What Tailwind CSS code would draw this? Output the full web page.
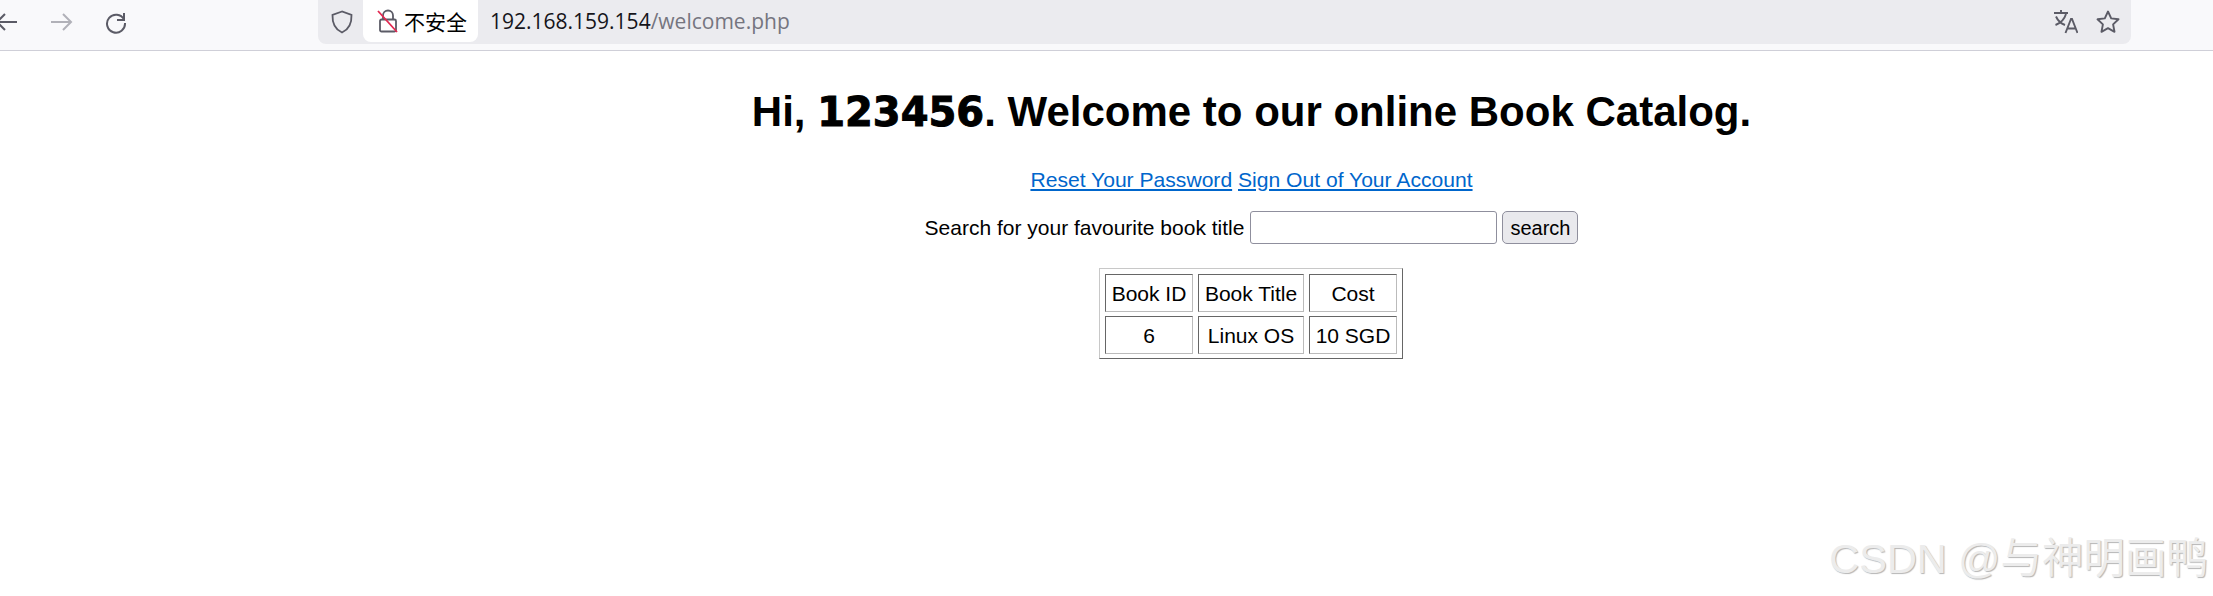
<!DOCTYPE html>
<html lang="en">
<head>
    <meta charset="UTF-8" />
    <title>Welcome</title>
    <script src="https://cdn.jsdelivr.net/npm/@tailwindcss/browser@4"></script>
</head>
<body class="relative h-[596px] overflow-hidden bg-white font-['Liberation_Sans','Noto_Sans_CJK_SC',sans-serif] text-black">
    <!-- Browser toolbar -->
    <div class="flex h-[51px] items-start border-b border-[#cfcfd8] bg-[#f9f9fb]">
        <div class="flex h-[44px] w-[318px] shrink-0 items-center text-[#5b5b66]">
            <svg class="ml-[-6px] h-6 w-6" viewBox="0 0 24 24" fill="none" stroke="currentColor" stroke-width="2"><path d="M23 12H3M11 4l-8 8 8 8"/></svg>
            <svg class="ml-[32px] h-6 w-6 text-[#b1b1b8]" viewBox="0 0 24 24" fill="none" stroke="currentColor" stroke-width="2"><path d="M1 12h20M13 4l8 8-8 8"/></svg>
            <svg class="ml-[30px] h-6 w-6" viewBox="0 0 24 24" fill="none" stroke="currentColor" stroke-width="2"><path d="M20 3v7h-7M20 9.500A9 9 0 1 0 21 13"/></svg>
        </div>
        <div class="flex h-[44px] w-[1813px] items-center rounded-b-lg bg-[#ebebef]">
            <svg class="ml-[12px] h-6 w-6 shrink-0 text-[#5b5b66]" viewBox="0 0 24 24" fill="none" stroke="currentColor" stroke-width="1.8"><path d="M12 1.500 2.500 5c-.3 8 1.500 14 9.500 17.500C20 19 21.800 13 21.500 5Z"/></svg>
            <div class="ml-[9px] flex h-[42px] w-[115px] shrink-0 items-center self-start rounded-b-lg bg-white">
                <svg class="ml-[14px] h-6 w-[22px] shrink-0 text-[#5b5b66]" viewBox="0 0 22 24" fill="none" stroke-width="1.8">
                    <path stroke="currentColor" d="M6 10V6.500a5 5 0 0 1 10 0V10M4.500 10.500h13a1.500 1.500 0 0 1 1.500 1.500v9a1.500 1.500 0 0 1-1.500 1.500h-13A1.500 1.500 0 0 1 3 21v-9a1.500 1.500 0 0 1 1.500-1.500Z"/>
                    <path stroke="#e22850" d="M1 2l19 21"/>
                </svg>
                <span class="ml-[5px] text-[21px] leading-none font-['Noto_Sans_CJK_SC']">不安全</span>
            </div>
            <span class="ml-[12px] font-['Open_Sans'] text-[21px] text-[#15141a]">192.168.159.154<span class="text-[#75757f]">/welcome.php</span></span>
            <svg class="ml-auto h-6 w-6 shrink-0 text-[#5b5b66]" viewBox="0 0 24 24" fill="none" stroke="currentColor" stroke-width="1.9"><path d="M0 3h14M7 0v3M2 6.500c2 4.500 5 7 9 8.500M12 4c-1.500 5-5 9-10.500 11M11.500 23 17 9h1l5.500 14M13.500 18.500h8"/></svg>
            <svg class="ml-[18px] mr-[11px] h-6 w-6 shrink-0 text-[#5b5b66]" viewBox="0 0 24 24" fill="none" stroke="currentColor" stroke-width="1.9"><path stroke-linejoin="round" d="m12 1.500 3.200 6.900 7.300.9-5.400 5.100 1.400 7.400L12 18.200l-6.500 3.600 1.400-7.400L1.500 9.300l7.300-.9Z"/></svg>
        </div>
    </div>

    <!-- Page content -->
    <div class="ml-[290px] flex flex-col items-center">
        <h1 class="mt-[36px] whitespace-nowrap text-[42px] font-bold leading-[50px]">Hi, <b class="font-['DejaVu_Sans'] text-[40px] [-webkit-text-stroke:1px_black]">123456</b>. Welcome to our online Book Catalog.</h1>
        <p class="mt-[30px] text-[21.100px] leading-[25px]">
            <a href="#" class="text-[#0066cc] underline">Reset Your Password</a>
            <a href="#" class="text-[#0066cc] underline">Sign Out of Your Account</a>
        </p>
        <form class="mt-[19px] flex h-[33px] items-center text-[21px]">
            <label for="q">Search for your favourite book title</label>
            <input id="q" type="text" class="ml-[6px] h-[33px] w-[247px] rounded-[3px] border border-[#8f8f9d] bg-white" />
            <button type="button" class="ml-[5px] h-[33px] w-[76px] rounded-[5px] border border-[#8f8f9d] bg-[#e9e9ed] text-[20px]">search</button>
        </form>
        <table class="mt-[24px] ml-[-1px] border-separate border-spacing-x-[5px] border-spacing-y-[4px] border pt-px border-t-[#c8c8c8] border-l-[#c8c8c8] border-r-[#666] border-b-[#666] text-center text-[21px] leading-[25px]">
            <tbody>
                <tr>
                    <td class="h-[38px] w-[88px] border border-t-[#666] border-l-[#666] border-r-[#bbb] border-b-[#bbb]">Book ID</td>
                    <td class="h-[38px] w-[106px] border border-t-[#666] border-l-[#666] border-r-[#bbb] border-b-[#bbb]">Book Title</td>
                    <td class="h-[38px] w-[88px] border border-t-[#666] border-l-[#666] border-r-[#bbb] border-b-[#bbb]">Cost</td>
                </tr>
                <tr>
                    <td class="h-[38px] border border-t-[#666] border-l-[#666] border-r-[#bbb] border-b-[#bbb]">6</td>
                    <td class="h-[38px] border border-t-[#666] border-l-[#666] border-r-[#bbb] border-b-[#bbb]">Linux OS</td>
                    <td class="h-[38px] border border-t-[#666] border-l-[#666] border-r-[#bbb] border-b-[#bbb]">10 SGD</td>
                </tr>
            </tbody>
        </table>
    </div>

    <!-- Watermark -->
    <div class="absolute right-[5px] top-[534px] whitespace-nowrap text-[41.500px] leading-[50px] text-[#ececec] [text-shadow:1px_1px_1px_#b5b5b5]">CSDN @与神明画鸭</div>
</body>
</html>
